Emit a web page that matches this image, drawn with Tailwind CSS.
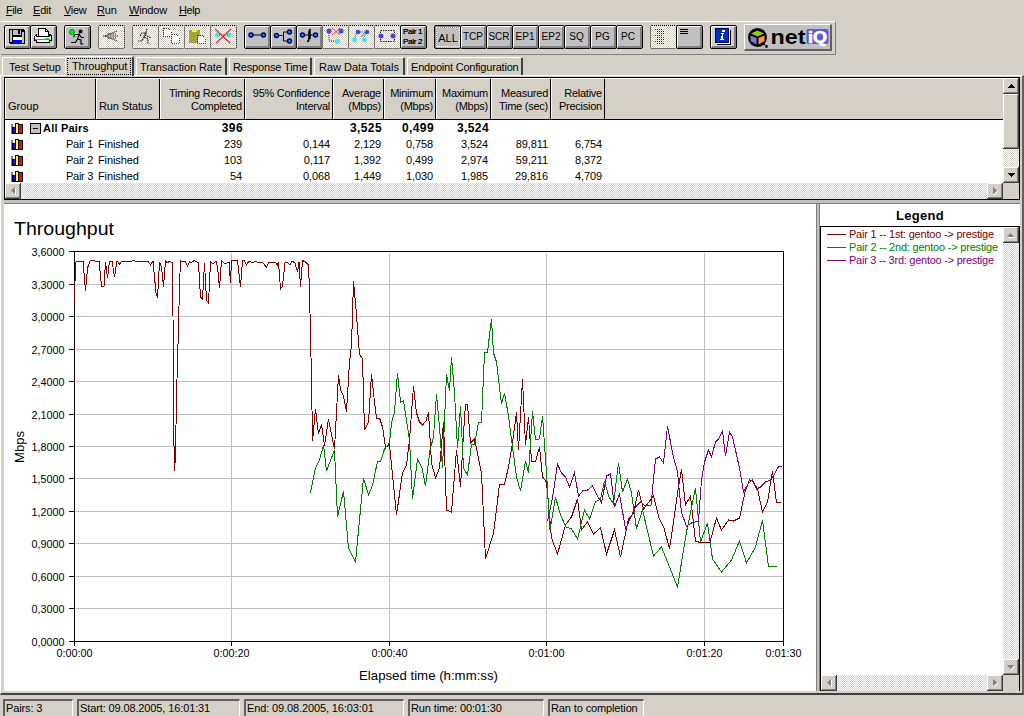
<!DOCTYPE html>
<html lang="en">
<head>
    <meta charset="UTF-8">
    <meta name="viewport" content="width=device-width, initial-scale=1.0">
    <title>Throughput</title>
    <script src="https://cdn.jsdelivr.net/npm/@tailwindcss/browser@4"></script>
</head>
<body class="w-[1024px] h-[716px] overflow-hidden bg-[#d4d0c8] text-black text-[11px] leading-[13px] font-['Liberation_Sans',Arial,sans-serif] flex flex-col cursor-default whitespace-nowrap">

    <!-- Menu -->
    <nav class="h-[21px] pl-[6px] pt-[4px] flex shrink-0">
        <span class="w-[27px] tracking-[-0.4px]"><u>F</u>ile</span>
        <span class="w-[31px] tracking-[-0.2px]"><u>E</u>dit</span>
        <span class="w-[33px] tracking-[-0.3px]"><u>V</u>iew</span>
        <span class="w-[32px] tracking-[-0.2px]"><u>R</u>un</span>
        <span class="w-[50px] tracking-[-0.2px]"><u>W</u>indow</span>
        <span class="tracking-[-0.4px]"><u>H</u>elp</span>
    </nav>

    <!-- Toolbar -->
    <div class="ml-px w-[835px] h-[34px] shrink-0 border-t border-r border-b border-t-white border-r-[#808080] border-b-[#808080] pl-[3px] pt-[3px] flex items-start gap-[7px]">
        <div class="flex">
            <button class="w-[27px] h-[24px] border border-black rounded-[2px] shadow-[inset_1px_1px_#fff,inset_-2px_-2px_#808080]">
                <svg width="25" height="22" shape-rendering="crispEdges">
                    <path d="M4 3h15v1h1v14H5v-1H4z" fill="#000"/>
                    <path d="M5 4h2v12H5zM17 6h2v11h-2z" fill="#c0c0c0"/>
                    <path d="M8 4h8v5H8z" fill="#c0c0c0"/><path d="M13 4h2v4h-2z" fill="#000"/>
                    <path d="M8 11h9v3H8z" fill="#fff"/><path d="M8 14h9v3H8z" fill="#00f"/>
                </svg>
            </button>
            <button class="-ml-px w-[27px] h-[24px] border border-black rounded-[2px] shadow-[inset_1px_1px_#fff,inset_-2px_-2px_#808080]">
                <svg width="25" height="22" shape-rendering="crispEdges">
                    <path d="M7.500 2.500h7l3 3v5h-10z" fill="#fff" stroke="#000"/><path d="M14.500 2.500v3h3" fill="none" stroke="#000"/>
                    <path d="M5.500 8.500l-2 2v4h2v2h13v-2h2v-5l-2-1v2h-13z" fill="#fff" stroke="#000"/>
                    <path d="M4 13h15v1H4z" fill="#808080"/><path d="M14 12h4v1h-4z" fill="#0f0"/>
                </svg>
            </button>
        </div>
        <button class="w-[27px] h-[24px] border border-black rounded-[2px] bg-[#c0c0c0] shadow-[inset_1px_1px_#fff,inset_-2px_-2px_#808080]">
            <svg width="25" height="22">
                <circle cx="7" cy="6" r="2.500" fill="#0f0" stroke="#008000"/>
                <circle cx="15.500" cy="5.500" r="2" fill="#000"/>
                <path d="M14.500 7.500l-2 5.500 3.500 1v4h2.500M12.500 13l-2 3.500H6M13.500 8.500H10L8.500 11M14.500 9l2 2.500h2.500" fill="none" stroke="#000" stroke-width="1.200"/>
            </svg>
        </button>
        <button class="w-[27px] h-[24px] border border-dotted border-black rounded-[2px] bg-[repeating-conic-gradient(#d4d0c8_0_25%,#fff_0_50%)] bg-[length:2px_2px]">
            <svg width="25" height="22"><path d="M4 10h15M6 10l12-5M6 10l12 5M9 8h8M9 12h8" stroke="#222" stroke-dasharray="1.500 .8" fill="none"/></svg>
        </button>
        <div class="flex">
            <button class="w-[27px] h-[24px] border border-dotted border-black rounded-[2px] bg-[repeating-conic-gradient(#d4d0c8_0_25%,#fff_0_50%)] bg-[length:2px_2px]">
                <svg width="25" height="22"><path d="M14 3l-3 8 4 2v5M11 11l-2 4H5M14 7H9l-2 3M12 9l6 3" stroke="#222" stroke-width="1.200" stroke-dasharray="1.500 .8" fill="none"/></svg>
            </button>
            <button class="-ml-px w-[27px] h-[24px] border border-dotted border-black rounded-[2px] bg-[repeating-conic-gradient(#d4d0c8_0_25%,#fff_0_50%)] bg-[length:2px_2px]">
                <svg width="25" height="22" shape-rendering="crispEdges"><path d="M4.500 2.500h5l3 3v5h-8zM12.500 8.500h5l3 3v6h-8z" fill="#fff" stroke="#333" stroke-dasharray="1 1"/></svg>
            </button>
            <button class="-ml-px w-[27px] h-[24px] border border-dotted border-black rounded-[2px] bg-[repeating-conic-gradient(#d4d0c8_0_25%,#fff_0_50%)] bg-[length:2px_2px]">
                <svg width="25" height="22" shape-rendering="crispEdges"><path d="M4 4h11v13H4z" fill="#a5a33c"/><path d="M7 3h5v3H7z" fill="#ee4"/><path d="M12.500 9.500h5l3 3v5h-8z" fill="#fff" stroke="#333" stroke-dasharray="1 1"/></svg>
            </button>
            <button class="-ml-px w-[27px] h-[24px] border border-dotted border-black rounded-[2px] bg-[repeating-conic-gradient(#d4d0c8_0_25%,#fff_0_50%)] bg-[length:2px_2px]">
                <svg width="25" height="22"><circle cx="6.500" cy="9" r="2.500" fill="#3ee"/><circle cx="18" cy="9" r="2.500" fill="#3ee"/><path d="M8 9h9" stroke="#555" stroke-dasharray="1 1"/><path d="M4 3l15 14M20 3L5 17" stroke="#f22" stroke-width="1.200"/></svg>
            </button>
        </div>
        <div class="flex">
            <button class="w-[27px] h-[24px] border border-black rounded-[2px] bg-[#c0c0c0] shadow-[inset_1px_1px_#fff,inset_-2px_-2px_#808080]">
                <svg width="25" height="22"><path d="M6 9h13" stroke="#000"/><g fill="#09f" stroke="#006" stroke-width="1.400"><circle cx="6" cy="9" r="2"/><circle cx="18.500" cy="9" r="2"/></g></svg>
            </button>
            <button class="-ml-px w-[27px] h-[24px] border border-black rounded-[2px] bg-[#c0c0c0] shadow-[inset_1px_1px_#fff,inset_-2px_-2px_#808080]">
                <svg width="25" height="22"><path d="M6 9.500h5.500M18 6h-5.500v9H18" stroke="#000" fill="none"/><g fill="#09f" stroke="#006" stroke-width="1.400"><circle cx="5.500" cy="9.500" r="2"/><circle cx="18.500" cy="6" r="2"/><circle cx="18.500" cy="15" r="2"/></g></svg>
            </button>
            <button class="-ml-px w-[27px] h-[24px] border border-black rounded-[2px] bg-[#c0c0c0] shadow-[inset_1px_1px_#fff,inset_-2px_-2px_#808080]">
                <svg width="25" height="22"><path d="M6 9h13" stroke="#000"/><path d="M14 3.500q-2 0-2 3v6q0 3-2 3M13 5v8" stroke="#000" stroke-width="1.600" fill="none"/><g fill="#09f" stroke="#006" stroke-width="1.400"><circle cx="5.500" cy="9" r="2"/><circle cx="18.500" cy="9" r="2"/></g></svg>
            </button>
            <button class="-ml-px w-[27px] h-[24px] border border-dotted border-black rounded-[2px] bg-[repeating-conic-gradient(#d4d0c8_0_25%,#fff_0_50%)] bg-[length:2px_2px]">
                <svg width="25" height="22"><path d="M6 5v10h8" stroke="#333" stroke-dasharray="1 1" fill="none"/><path d="M9 2l8 7M17 2l-8 7" stroke="#f33"/><g fill="#44d"><circle cx="6" cy="5" r="2.500"/><circle cx="18" cy="5" r="2.500"/></g><circle cx="14.500" cy="15.500" r="2.500" fill="#3ee"/></svg>
            </button>
            <button class="-ml-px w-[27px] h-[24px] border border-dotted border-black rounded-[2px] bg-[repeating-conic-gradient(#d4d0c8_0_25%,#fff_0_50%)] bg-[length:2px_2px]">
                <svg width="25" height="22"><path d="M5 14l3-8h9l-3 8" stroke="#333" stroke-dasharray="1 1" fill="none"/><g fill="#44d"><circle cx="9" cy="6" r="2.300"/><circle cx="18" cy="6" r="2.300"/></g><path d="M12 11l5-6" stroke="#0aa"/><g fill="#3ee"><circle cx="5.500" cy="14" r="2.300"/><circle cx="15.500" cy="14" r="2.300"/></g></svg>
            </button>
            <button class="-ml-px w-[27px] h-[24px] border border-dotted border-black rounded-[2px] bg-[repeating-conic-gradient(#d4d0c8_0_25%,#fff_0_50%)] bg-[length:2px_2px]">
                <svg width="25" height="22"><path d="M5.500 4.500h14v11h-14z" stroke="#222" stroke-dasharray="1.500 1" fill="none"/><g fill="#44d"><circle cx="6" cy="10" r="2.500"/><circle cx="18" cy="10" r="2.500"/></g></svg>
            </button>
            <button class="-ml-px w-[27px] h-[24px] border border-black rounded-[2px] bg-[#c0c0c0] shadow-[inset_1px_1px_#fff,inset_-2px_-2px_#808080] text-[8px] leading-[10px] text-left pl-[2px] pb-px tracking-[-0.3px] [text-shadow:0_0_#000]">Pair 1<br>Pair 2</button>
        </div>
        <div class="flex">
            <button class="w-[27px] h-[24px] border border-black rounded-[2px] bg-[#c0c0c0] shadow-[inset_2px_2px_#909090] p-[1px]"><span class="block h-[20px] border border-dotted border-white leading-[20px] -mr-px">ALL</span></button>
            <button class="-ml-px w-[27px] h-[24px] border border-black rounded-[2px] bg-[#c0c0c0] shadow-[inset_1px_1px_#fff,inset_-2px_-2px_#808080] text-[10px] leading-[22px] pr-px">TCP</button>
            <button class="-ml-px w-[27px] h-[24px] border border-black rounded-[2px] bg-[#c0c0c0] shadow-[inset_1px_1px_#fff,inset_-2px_-2px_#808080] text-[10px] leading-[22px] pr-px">SCR</button>
            <button class="-ml-px w-[27px] h-[24px] border border-black rounded-[2px] bg-[#c0c0c0] shadow-[inset_1px_1px_#fff,inset_-2px_-2px_#808080] text-[10px] leading-[22px] pr-px">EP1</button>
            <button class="-ml-px w-[27px] h-[24px] border border-black rounded-[2px] bg-[#c0c0c0] shadow-[inset_1px_1px_#fff,inset_-2px_-2px_#808080] text-[10px] leading-[22px] pr-px">EP2</button>
            <button class="-ml-px w-[27px] h-[24px] border border-black rounded-[2px] bg-[#c0c0c0] shadow-[inset_1px_1px_#fff,inset_-2px_-2px_#808080] text-[10px] leading-[22px] pr-[2px]">SQ</button>
            <button class="-ml-px w-[27px] h-[24px] border border-black rounded-[2px] bg-[#c0c0c0] shadow-[inset_1px_1px_#fff,inset_-2px_-2px_#808080] text-[10px] leading-[22px] pr-[2px]">PG</button>
            <button class="-ml-px w-[27px] h-[24px] border border-black rounded-[2px] bg-[#c0c0c0] shadow-[inset_1px_1px_#fff,inset_-2px_-2px_#808080] text-[10px] leading-[22px] pr-[3px]">PC</button>
        </div>
        <div class="flex">
            <button class="w-[27px] h-[24px] border border-dotted border-black rounded-[2px] bg-[repeating-conic-gradient(#d4d0c8_0_25%,#fff_0_50%)] bg-[length:2px_2px]">
                <svg width="25" height="22" shape-rendering="crispEdges"><path d="M4 3.500h8M6 5.500h8M6 7.500h8M4 9.500h8M6 11.500h8M6 13.500h8M4 15.500h8M6 17.500h8" stroke="#222" stroke-dasharray="1 1"/></svg>
            </button>
            <button class="-ml-px w-[27px] h-[24px] border border-black rounded-[2px] bg-[#c0c0c0] shadow-[inset_1px_1px_#fff,inset_-2px_-2px_#808080]">
                <svg width="25" height="22" shape-rendering="crispEdges"><path d="M3 3.500h8M3 5.500h8M3 7.500h8" stroke="#000"/></svg>
            </button>
        </div>
        <button class="w-[27px] h-[24px] border border-black rounded-[2px] shadow-[inset_1px_1px_#fff,inset_-2px_-2px_#808080]">
            <svg width="25" height="22" shape-rendering="crispEdges"><path d="M6 4h14v15H6z" fill="#000"/><path d="M6 4h13v14H6z" fill="#fff"/><path d="M4 2h14v15H4z" fill="#000080"/><path d="M5 3h12v13H5z" fill="#0030c0"/><path d="M11 4h3v2h-3zM10 7h3v1h-1v5h1v1H9v-1h1l1-5h-1z" fill="#fff"/></svg>
        </button>
        <div class="-mt-px w-[88px] h-[27px] border-t border-l border-t-white border-l-white border-r-2 border-b-2 border-r-[#606060] border-b-[#606060] bg-[#c0c0c0]">
            <svg width="85" height="24">
                <circle cx="12.500" cy="12.500" r="9.500" fill="#000"/><circle cx="21.500" cy="21.500" r="1.400" fill="#000"/><path d="M17 17l3.500 2-1 1.500-4-2z" fill="#000"/>
                <path d="M6 8.500l6.500-3L19 8.500l-6.500 3z" fill="#9c0"/>
                <path d="M5.500 10.500l6 2.500v6.500l-6-3.500z" fill="#77d"/>
                <path d="M19.500 10.500l-6 2.500v6.500l6-3.500z" fill="#f93"/>
                <rect x="61.500" y="4" width="22" height="15" rx="2" fill="#5c5cc8"/>
                <g font-family="Liberation Sans" font-weight="bold"><text x="25.500" y="18.500" font-size="20" textLength="35" lengthAdjust="spacingAndGlyphs">net</text><text x="63" y="17.500" font-size="17" fill="#fff" stroke="#fff" stroke-width=".7" textLength="19" lengthAdjust="spacingAndGlyphs">iQ</text></g>
            </svg>
        </div>
    </div>

    <!-- Tabs -->
    <div class="h-[20px] shrink-0 flex items-end pl-[2px] relative z-10 leading-[17px]">
        <div class="w-[63px] h-[18px] border-t border-l border-white rounded-tl-[2px] pl-[6px] pt-px">Test Setup</div>
        <div class="w-[69px] h-[20px] -mb-px border-t border-l border-white border-r-2 border-r-[#404040] rounded-t-[2px] bg-[#d4d0c8] p-px"><div class="h-[17px] border border-dotted border-black pl-[4px] leading-[14px] -tracking-[0.1px]">Throughput</div></div>
        <div class="ml-[2px] w-[91px] h-[18px] border-t border-l border-white border-r-2 border-r-[#404040] rounded-t-[2px] pl-[3px] pt-px tracking-[-0.1px]">Transaction Rate</div>
        <div class="ml-[2px] w-[83px] h-[18px] border-t border-l border-white border-r-2 border-r-[#404040] rounded-t-[2px] pl-[3px] pt-px tracking-[-0.15px]">Response Time</div>
        <div class="ml-[2px] w-[91px] h-[18px] border-t border-l border-white border-r-2 border-r-[#404040] rounded-t-[2px] pl-[4px] pt-px">Raw Data Totals</div>
        <div class="ml-[2px] w-[116px] h-[18px] border-t border-l border-white border-r-2 border-r-[#404040] rounded-t-[2px] pl-[3px] pt-px tracking-[-0.2px]">Endpoint Configuration</div>
    </div>

    <!-- Tab page -->
    <main class="h-[620px] shrink-0 border-t border-l border-white border-r-2 border-r-[#606060] border-b-2 border-b-[#404040] pl-[3px] pt-px pr-[2px] pb-[2px] flex flex-col">

        <!-- Results table -->
        <section class="h-[123px] w-[1016px] border border-black flex flex-col shrink-0">
            <div class="flex h-[105px]">
                <div class="grow bg-white tracking-[-0.1px]">
                    <div class="h-[42px] bg-[#d4d0c8] border-b border-black border-t-white border-t grid grid-cols-[91px_64px_85px_88px_51px_52px_55px_60px_54px_1fr] text-right tracking-[-0.25px] *:border-l *:border-l-white *:pr-[2px] *:flex *:flex-col *:justify-end *:pb-[6px]">
                        <div class="border-r border-r-black pl-[2px] text-left tracking-normal">Group</div>
                        <div class="border-r border-r-black pl-[2px] text-left tracking-[-0.1px]">Run Status</div>
                        <div class="border-r border-r-black">Timing Records<br>Completed</div>
                        <div class="border-r border-r-black">95% Confidence<br>Interval</div>
                        <div class="border-r border-r-black">Average<br>(Mbps)</div>
                        <div class="border-r border-r-black">Minimum<br>(Mbps)</div>
                        <div class="border-r border-r-black">Maximum<br>(Mbps)</div>
                        <div class="border-r border-r-black">Measured<br>Time (sec)</div>
                        <div class="border-r border-r-black">Relative<br>Precision</div>
                    </div>
                    <div class="h-[16px] leading-[16px] grid grid-cols-[91px_64px_85px_88px_51px_52px_55px_60px_54px] text-right text-[12px] font-bold tracking-[0.4px] *:pr-[2px]">
                        <div class="flex items-center pl-[6px]">
                            <svg width="13" height="12" shape-rendering="crispEdges"><path d="M0 2h2v10H0z" fill="#808080"/><path d="M1 5h4v7H1z" fill="#000"/><path d="M2 6h2v5H2z" fill="#00f"/><path d="M4 1h4v11H4z" fill="#000"/><path d="M5 2h2v9H5z" fill="#ff0"/><path d="M8 2h4v10H8z" fill="#000"/><path d="M8 3h3v8H8z" fill="#f00"/></svg>
                            <span class="ml-[6px] size-[11px] shrink-0 border border-black bg-[#c0c0c0] flex items-center justify-center"><i class="w-[5px] h-px bg-black"></i></span>
                            <span class="ml-[2px] text-[11px] tracking-[0.2px]">All Pairs</span>
                        </div>
                        <div></div><div>396</div><div></div><div>3,525</div><div>0,499</div><div>3,524</div><div></div><div></div>
                    </div>
                    <div class="h-[16px] leading-[16px] grid grid-cols-[91px_64px_85px_88px_51px_52px_55px_60px_54px] text-right *:pr-[3px]">
                        <div class="flex items-center justify-between pl-[6px]">
                            <svg width="13" height="12" shape-rendering="crispEdges"><path d="M0 2h2v10H0z" fill="#808080"/><path d="M1 5h4v7H1z" fill="#000"/><path d="M2 6h2v5H2z" fill="#00f"/><path d="M4 1h4v11H4z" fill="#000"/><path d="M5 2h2v9H5z" fill="#ff0"/><path d="M8 2h4v10H8z" fill="#000"/><path d="M8 3h3v8H8z" fill="#f00"/></svg>
                            <span class="tracking-[-0.3px]">Pair 1</span>
                        </div>
                        <div class="text-left pl-[2px]">Finished</div><div>239</div><div>0,144</div><div>2,129</div><div>0,758</div><div>3,524</div><div>89,811</div><div>6,754</div>
                    </div>
                    <div class="h-[16px] leading-[16px] grid grid-cols-[91px_64px_85px_88px_51px_52px_55px_60px_54px] text-right *:pr-[3px]">
                        <div class="flex items-center justify-between pl-[6px]">
                            <svg width="13" height="12" shape-rendering="crispEdges"><path d="M0 2h2v10H0z" fill="#808080"/><path d="M1 5h4v7H1z" fill="#000"/><path d="M2 6h2v5H2z" fill="#00f"/><path d="M4 1h4v11H4z" fill="#000"/><path d="M5 2h2v9H5z" fill="#ff0"/><path d="M8 2h4v10H8z" fill="#000"/><path d="M8 3h3v8H8z" fill="#f00"/></svg>
                            <span class="tracking-[-0.3px]">Pair 2</span>
                        </div>
                        <div class="text-left pl-[2px]">Finished</div><div>103</div><div>0,117</div><div>1,392</div><div>0,499</div><div>2,974</div><div>59,211</div><div>8,372</div>
                    </div>
                    <div class="h-[15px] leading-[16px] grid grid-cols-[91px_64px_85px_88px_51px_52px_55px_60px_54px] text-right *:pr-[3px]">
                        <div class="flex items-center justify-between pl-[6px]">
                            <svg width="13" height="12" shape-rendering="crispEdges"><path d="M0 2h2v10H0z" fill="#808080"/><path d="M1 5h4v7H1z" fill="#000"/><path d="M2 6h2v5H2z" fill="#00f"/><path d="M4 1h4v11H4z" fill="#000"/><path d="M5 2h2v9H5z" fill="#ff0"/><path d="M8 2h4v10H8z" fill="#000"/><path d="M8 3h3v8H8z" fill="#f00"/></svg>
                            <span class="tracking-[-0.3px]">Pair 3</span>
                        </div>
                        <div class="text-left pl-[2px]">Finished</div><div>54</div><div>0,068</div><div>1,449</div><div>1,030</div><div>1,985</div><div>29,816</div><div>4,709</div>
                    </div>
                </div>
                <div class="w-[16px] flex flex-col bg-[repeating-conic-gradient(#d4d0c8_0_25%,#fff_0_50%)] bg-[length:2px_2px]">
                    <div class="size-[16px] bg-[#d4d0c8] shadow-[inset_-1px_-1px_#404040,inset_1px_1px_#fff,inset_-2px_-2px_#808080] flex items-center justify-center"><svg width="7" height="4" shape-rendering="crispEdges"><path d="M3 0h1v1h1v1h1v1h1v1H0V3h1V2h1V1h1z"/></svg></div>
                    <div class="h-[55px] bg-[#d4d0c8] shadow-[inset_-1px_-1px_#404040,inset_1px_1px_#fff,inset_-2px_-2px_#808080]"></div>
                    <div class="mt-auto size-[16px] bg-[#d4d0c8] shadow-[inset_-1px_-1px_#404040,inset_1px_1px_#fff,inset_-2px_-2px_#808080] flex items-center justify-center"><svg width="7" height="4" shape-rendering="crispEdges"><path d="M0 0h7v1H6v1H5v1H4v1H3V3H2V2H1V1H0z"/></svg></div>
                </div>
            </div>
            <div class="h-[16px] flex">
                <div class="grow flex justify-between bg-[repeating-conic-gradient(#d4d0c8_0_25%,#fff_0_50%)] bg-[length:2px_2px]">
                    <div class="size-[16px] bg-[#d4d0c8] shadow-[inset_-1px_-1px_#404040,inset_1px_1px_#fff,inset_-2px_-2px_#808080] flex items-center justify-center"><svg width="5" height="8"><path d="M4 0v7L0 3.500z" fill="#808080"/><path d="M4.500 1v7" stroke="#fff"/></svg></div>
                    <div class="size-[16px] bg-[#d4d0c8] shadow-[inset_-1px_-1px_#404040,inset_1px_1px_#fff,inset_-2px_-2px_#808080] flex items-center justify-center"><svg width="5" height="8"><path d="M1 8l4-4" stroke="#fff"/><path d="M0 0v7l4-3.500z" fill="#808080"/></svg></div>
                </div>
                <div class="w-[16px]"></div>
            </div>
        </section>
        <div class="h-[4px] shrink-0 w-[1016px] bg-[#c0c0c0] border-b border-[#808080]"></div>

        <div class="flex h-[487px] w-[1016px]">
            <!-- Throughput graph -->
            <svg class="bg-white shrink-0" width="812" height="487" viewBox="4 204 812 487" font-family="Liberation Sans" font-size="11">
                <text x="14" y="235" font-size="18.500" textLength="100" lengthAdjust="spacingAndGlyphs">Throughput</text>
                <g shape-rendering="crispEdges" fill="none">
                    <path stroke="#c0c0c0" d="M75 284.500h708M75 316.500h708M75 349.500h708M75 381.500h708M75 414.500h708M75 446.500h708M75 478.500h708M75 511.500h708M75 543.500h708M75 576.500h708M75 608.500h708M231.500 253v388M389.500 253v388M546.500 253v388M704.500 253v388"/>
                    <path stroke="#000" d="M69 251.500h715M69 641.500h715M74.500 251v395M783.500 251v395M69 284.500h5M69 316.500h5M69 349.500h5M69 381.500h5M69 414.500h5M69 446.500h5M69 478.500h5M69 511.500h5M69 543.500h5M69 576.500h5M69 608.500h5M231.500 641v5M389.500 641v5M546.500 641v5M704.500 641v5"/>
                    <!-- Pair 1 -->
                    <polyline stroke="#800000" points="74.5,301 75.5,263 76.500,261 83,261 85.5,291 87.5,268 90,261 92,260 95,261 99,261 101.5,286 104,286 105.500,262 107.500,278 109.500,261 112,261 114.500,277 117,261 119.500,264 121.500,261.500 131,261.500 133,260.500 137,261.500 148,261.500 150.500,265 153,261 156,293 157.500,298 159.500,262 161.500,267 163.500,287 165.500,261 167,263 170,261 172.500,263 173,316 173.500,420 174.500,471 175.500,455 176.500,396 178.500,327 179.500,285 180.500,261 182,262 185,261 187.500,266 189.500,262 191,263 194,260.500 198.500,263 200.500,297 202.500,299 204.500,263 206.500,300 208.500,303 210.500,262 213,264 216,261 217.500,267 219.500,288 221.500,260.500 224,263 227,263 229,262 230.500,283 231.500,260.500 237.500,260.500 240.500,287 242.500,260.500 244,260.500 246.500,265 249,261 253,263 255,261 259,263 262,262 266.500,267 269,262 272,263 275,262 277.500,265 278.500,262 280.500,289 282.500,286 285,263 287,262 290,265 292,261 295,263 297.500,272 299,262 300.500,287 302.500,260.500 305.500,262 308.500,265 309.500,290 310.500,335 311.500,378 312.500,441 315.500,409 318.500,434 321.500,424 324.500,446 328.500,419 334.500,449 338.500,375 340.500,390 343.500,396 346.500,412 349.500,362 351.500,345 353.500,281 356.500,315 359.500,354 362.500,359 364.500,430 368.500,422 371.500,374 374.500,402 376.500,418 379.500,418 382.500,427 385.500,447 389.500,445 396.500,515 402.500,473 406.500,465 409.500,440 413.500,386 416.500,413 419.500,422 422.500,425 426,421 428.500,412 431.500,463 435.500,478 439.500,468 443.500,422 446.500,510 451.500,512 456.500,450 460.500,487 463.500,433 465.500,404.500 467.500,404.500 470.500,443 474.500,439 481.500,473 485.500,559 493.500,533 499.500,484.500 504.500,484.500 508.500,467 512.500,443 516.500,412 518.500,450 522.500,379 525.500,445 528.500,417 531.500,461.500 535.500,461.500 539.500,447 542.500,477 546.500,482 551.500,538 557.500,554 565.500,525 571.500,517 577.500,499 581.500,530 587.500,522 593.500,534 600.500,528 606.500,554 614.500,530 620.500,557 628.500,519 633.500,513 638.500,490 643.500,509 653.500,496 659,518 664,528 669.500,549 678.500,487 681.500,469 685.500,505 690.500,496 695.500,541 701.500,543 710,542 716.500,518 721.500,530 728.500,520 733.500,521 739.500,518 745,492 749.500,480 752.500,481 757.500,489 762.500,512 767.500,502 772.500,471 776.500,502.500 780.500,502.500"/>
                    <!-- Pair 2 -->
                    <polyline stroke="#008000" points="310.500,493 315.500,468 319.500,460 323.500,445 326.500,471 334.500,450 337.500,517 343.500,491 348.500,548 355.500,562 363.500,478 368.500,495 372.500,485 377.500,461.500 380.500,461.500 384.500,449 389.500,443 391.500,423 394.500,412 397.500,373 400.500,402 403.500,401 409.500,440 412.500,499 417.500,459 422,468 425.500,486 430,450 433.500,437 436.500,394 439.500,427 442.500,468 446.500,374 449.500,391 451.500,357 454.500,393 457.500,448 460.500,406 463.500,468 467.500,475 471.500,444.500 474.500,444.500 478.500,422.500 481.500,422.500 484.500,353 487.500,352 491.500,319 493.500,353 496.500,362 501.500,404 504.500,393 508.500,416 512.500,447 516.500,477 520.500,491 525.500,461 528.500,473 532.500,411 535.500,440 539.500,439 542.500,416 546.500,473 550,530 555.500,497 560.500,515 566,527 571.500,529 577.500,539 584.500,510 589.500,519 595.500,502 600.500,499 604.500,481 608.500,496 613.500,504 618.500,463 622.500,492 627.500,479 631.500,493 636.500,529 642.500,510 653.500,556 661.500,547 677.500,587 686.500,532 695.500,488 700.500,542 707.500,523 712.500,559 721.500,572 731.500,560 739.500,541 746.500,563 755.500,547 762.500,520 768.500,566.500 776.500,566.500"/>
                    <!-- Pair 3 -->
                    <polyline stroke="#800080" points="547.500,521.500 552.500,498 557.500,464 561.500,473 565.500,477 569.500,487 574.500,473 578.500,496 583.500,490 587.500,490 592.500,486 596.500,494 601.500,503 606.500,476 610.500,474 614.500,507 619.500,494 625.500,529 630.500,518 635.500,507 640.500,502 645.500,506 651,505 655.500,459 659.500,457 663.500,463 667.500,426 672.500,453 677.500,472 681.500,513 686.500,526 691.500,523 698.500,521 701.500,480 704.500,462 708.500,450 711.500,457 715.500,442 718.500,439 722.500,431 725.500,456 729.500,432 732.500,437 739.500,468 743.500,492 748.500,483 752.500,480 756.500,489 760.500,487 765.500,482 770,480 773.500,476 778.500,466.500 781.500,466.500"/>
                </g>
                <g text-anchor="end" font-size="11.500">
                    <text x="64.500" y="255.500" textLength="33" lengthAdjust="spacingAndGlyphs">3,6000</text>
                    <text x="64.500" y="288.500" textLength="33" lengthAdjust="spacingAndGlyphs">3,3000</text>
                    <text x="64.500" y="320.500" textLength="33" lengthAdjust="spacingAndGlyphs">3,0000</text>
                    <text x="64.500" y="353.500" textLength="33" lengthAdjust="spacingAndGlyphs">2,7000</text>
                    <text x="64.500" y="385.500" textLength="33" lengthAdjust="spacingAndGlyphs">2,4000</text>
                    <text x="64.500" y="418.500" textLength="33" lengthAdjust="spacingAndGlyphs">2,1000</text>
                    <text x="64.500" y="450.500" textLength="33" lengthAdjust="spacingAndGlyphs">1,8000</text>
                    <text x="64.500" y="482.500" textLength="33" lengthAdjust="spacingAndGlyphs">1,5000</text>
                    <text x="64.500" y="515.500" textLength="33" lengthAdjust="spacingAndGlyphs">1,2000</text>
                    <text x="64.500" y="547.500" textLength="33" lengthAdjust="spacingAndGlyphs">0,9000</text>
                    <text x="64.500" y="580.500" textLength="33" lengthAdjust="spacingAndGlyphs">0,6000</text>
                    <text x="64.500" y="612.500" textLength="33" lengthAdjust="spacingAndGlyphs">0,3000</text>
                    <text x="64.500" y="645.500" textLength="33" lengthAdjust="spacingAndGlyphs">0,0000</text>
                </g>
                <g text-anchor="middle" font-size="11.500">
                    <text x="74.500" y="657" textLength="36" lengthAdjust="spacingAndGlyphs">0:00:00</text>
                    <text x="231.500" y="657" textLength="36" lengthAdjust="spacingAndGlyphs">0:00:20</text>
                    <text x="389.500" y="657" textLength="36" lengthAdjust="spacingAndGlyphs">0:00:40</text>
                    <text x="546.500" y="657" textLength="36" lengthAdjust="spacingAndGlyphs">0:01:00</text>
                    <text x="704.500" y="657" textLength="36" lengthAdjust="spacingAndGlyphs">0:01:20</text>
                    <text x="783.500" y="657" textLength="36" lengthAdjust="spacingAndGlyphs">0:01:30</text>
                </g>
                <text x="359" y="680" font-size="13" textLength="139" lengthAdjust="spacingAndGlyphs">Elapsed time (h:mm:ss)</text>
                <text transform="translate(24 463) rotate(-90)" font-size="12.500" textLength="32" lengthAdjust="spacingAndGlyphs">Mbps</text>
            </svg>
            <div class="w-[4px] bg-[#c0c0c0] border-x border-[#808080]"></div>

            <!-- Legend -->
            <aside class="w-[200px] flex flex-col bg-white">
                <h2 class="h-[22px] leading-[23px] text-center text-[13px] font-bold tracking-[0.3px]">Legend</h2>
                <div class="grow border-t border-l border-r border-black flex flex-col">
                    <div class="grow flex">
                        <ul class="grow pl-[6px] pt-px">
                            <li class="h-[13px] flex items-center gap-[3px]"><i class="w-[19px] h-px bg-[#800000]"></i><svg width="150" height="13"><text x="0" y="10" fill="#800000" textLength="145">Pair 1 -- 1st: gentoo -&gt; prestige</text></svg></li>
                            <li class="h-[13px] flex items-center gap-[3px]"><i class="w-[19px] h-px bg-[#008000]"></i><svg width="150" height="13"><text x="0" y="10" fill="#008000" textLength="149">Pair 2 -- 2nd: gentoo -&gt; prestige</text></svg></li>
                            <li class="h-[13px] flex items-center gap-[3px]"><i class="w-[19px] h-px bg-[#800080]"></i><svg width="150" height="13"><text x="0" y="10" fill="#800080" textLength="145">Pair 3 -- 3rd: gentoo -&gt; prestige</text></svg></li>
                        </ul>
                        <div class="w-[16px] shrink-0 flex flex-col justify-between bg-[repeating-conic-gradient(#d4d0c8_0_25%,#fff_0_50%)] bg-[length:2px_2px]">
                            <div class="size-[16px] bg-[#d4d0c8] shadow-[inset_-1px_-1px_#404040,inset_1px_1px_#fff,inset_-2px_-2px_#808080] flex items-center justify-center"><svg width="8" height="5"><path d="M1 4.500h7" stroke="#fff"/><path d="M0 4h7L3.500 0z" fill="#808080"/></svg></div>
                            <div class="size-[16px] bg-[#d4d0c8] shadow-[inset_-1px_-1px_#404040,inset_1px_1px_#fff,inset_-2px_-2px_#808080] flex items-center justify-center"><svg width="8" height="5"><path d="M4 5l4-4" stroke="#fff"/><path d="M0 0h7L3.500 4z" fill="#808080"/></svg></div>
                        </div>
                    </div>
                    <div class="h-[16px] flex bg-[#d4d0c8]">
                        <div class="grow flex justify-between bg-[repeating-conic-gradient(#d4d0c8_0_25%,#fff_0_50%)] bg-[length:2px_2px]">
                            <div class="size-[16px] bg-[#d4d0c8] shadow-[inset_-1px_-1px_#404040,inset_1px_1px_#fff,inset_-2px_-2px_#808080] flex items-center justify-center"><svg width="5" height="8"><path d="M4 0v7L0 3.500z" fill="#808080"/><path d="M4.500 1v7" stroke="#fff"/></svg></div>
                            <div class="size-[16px] bg-[#d4d0c8] shadow-[inset_-1px_-1px_#404040,inset_1px_1px_#fff,inset_-2px_-2px_#808080] flex items-center justify-center"><svg width="5" height="8"><path d="M1 8l4-4" stroke="#fff"/><path d="M0 0v7l4-3.500z" fill="#808080"/></svg></div>
                        </div>
                        <div class="w-[16px]"></div>
                    </div>
                </div>
            </aside>
        </div>
    </main>

    <!-- Status bar -->
    <footer class="mt-[4px] pl-[3px] h-[17px] shrink-0 flex gap-[4px] leading-[14px] tracking-[-0.12px] *:border-t-2 *:border-l-2 *:border-t-[#606060] *:border-l-[#606060] *:border-r *:border-r-white *:pl-px">
        <div class="w-[70px]">Pairs: 3</div>
        <div class="w-[163px]">Start: 09.08.2005, 16:01:31</div>
        <div class="w-[160px]">End: 09.08.2005, 16:03:01</div>
        <div class="w-[136px]">Run time: 00:01:30</div>
        <div class="w-[96px]">Ran to completion</div>
    </footer>
</body>
</html>
